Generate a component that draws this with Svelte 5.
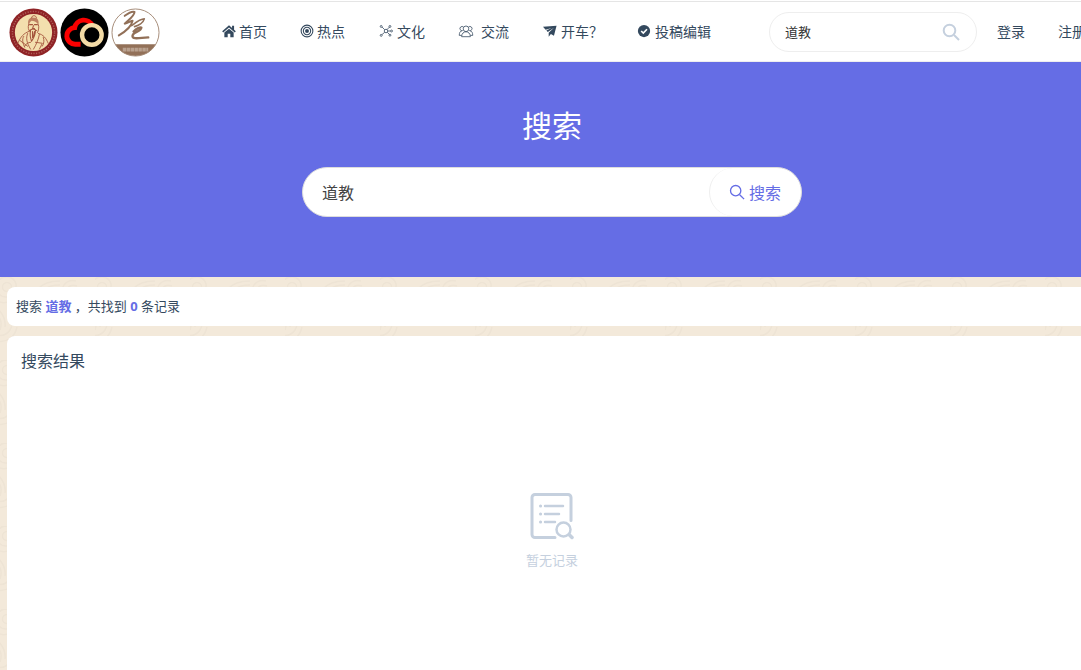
<script>
  let keyword = $state('道教');
  const term = '道教';
  const total = 0;

  const menu = [
    { label: '首页', icon: 'home' },
    { label: '热点', icon: 'target' },
    { label: '文化', icon: 'hub' },
    { label: '交流', icon: 'users' },
    { label: '开车？', icon: 'plane' },
    { label: '投稿编辑', icon: 'check' }
  ];
</script>

{#snippet magnifier()}
  <svg class="magnifier" viewBox="0 0 18 18" aria-hidden="true">
    <circle cx="7.5" cy="7.5" r="5.8" />
    <path d="M12 12l5 5" />
  </svg>
{/snippet}

<div class="page">
  <header>
    <a class="brand" href="/" aria-label="首页">
      <svg viewBox="0 0 50 50" aria-hidden="true">
        <circle cx="25" cy="25" r="24.5" fill="#8f2326" />
        <circle cx="25" cy="25" r="21.500" fill="none" stroke="#b0605a" stroke-width="1.500" stroke-dasharray="1.200 1.500" />
        <circle cx="25" cy="25" r="19" fill="#f3dfae" />
        <path d="M20 18c-2-6 2-9 5-8 4-1 6 3 5 7-2-3-5-4-7-4-2 1-2 3-3 5z" fill="#bd8062" />
        <g fill="none" stroke="#a4543c" stroke-width="0.900" stroke-linecap="round" stroke-linejoin="round">
          <path d="M23 10c0-3 5-3 5 0M20 17c-1 3 0 5 1 7M30 17c1 3 0 6-1 8" />
          <path d="M21 17h3M26 17h3M25 18l-1 3h2M21 23c2-2 5-2 7 0M22 23c-1 4 0 8 1 11 2-3 4-6 4-11M24 24v6M26 24l-1 5" stroke-width="1.100" />
          <path d="M20 24c-5 2-8 5-11 12M30 26c5 1 8 5 10 10M19 26c-2 5-1 9 3 16M31 27c-1 5-3 10-6 15M15 29c-2 3-1 7 1 11M11 33l8 6M35 30c1 3 1 6-1 9M27 35l7 1-3 6M22 35c-3 0-5 2-6 4" />
        </g>
      </svg>
      <svg viewBox="0 0 50 50" aria-hidden="true">
        <circle cx="25" cy="25" r="24.500" fill="#000" />
        <path d="M21 37h-5a8.500 8.500 0 0 1-1-17 9.500 9.500 0 0 1 18-2" fill="none" stroke="#fb0000" stroke-width="5" />
        <circle cx="32.500" cy="27.500" r="10" fill="#000" stroke="#f3dba6" stroke-width="4.500" />
      </svg>
      <svg viewBox="0 0 50 50" aria-hidden="true">
        <circle cx="25" cy="25" r="24" fill="#fff" />
        <path d="M4.200 37h41.600A24 24 0 0 1 4.200 37z" fill="#927058" />
        <circle cx="25" cy="25" r="24" fill="none" stroke="#a58b78" stroke-width="1" />
        <path d="M12 42.500h26" stroke="#b9a18f" stroke-width="4" stroke-dasharray="3.500 .5" />
        <g fill="none" stroke="#927058" stroke-linecap="round" stroke-linejoin="round">
          <path d="M14 8c4-3 7-5 10-4 0 4-6 8-10 12 3 0 6-3 8-3-1 6-9 12-14 15" stroke-width="2" />
          <path d="M21 18c4-3 9-7 13-7-1 4-6 7-10 8" stroke-width="1.600" />
          <path d="M23 24c3-3 7-5 8-4 0 4-8 4-9 8-1 5 9 2 16 2" stroke-width="2.400" />
        </g>
      </svg>
    </a>

    <nav>
      {#each menu as item}
        <a class={item.icon} href="/{item.icon}">
          <svg viewBox="0 0 16 16" aria-hidden="true">
            {#if item.icon === 'home'}
              <path fill="currentColor" d="M8 1.500l7.800 6.800-1.200 1.400L8 4 1.400 9.700.2 8.300zM11.500 2h2.300v4.500l-2.300-2zM2.700 9.800L8 5.300l5.300 4.500V15H9.500v-4h-3v4H2.700z" />
            {:else if item.icon === 'target'}
              <circle class="line" cx="8" cy="8" r="6.700" />
              <circle class="line" cx="8" cy="8" r="4.200" />
              <circle fill="currentColor" cx="8" cy="8" r="2.200" />
            {:else if item.icon === 'hub'}
              <g class="line thin">
                <path d="M3.500 3.500l3 3M12 3.500l-3 3M3.500 12l3-2.500M9.500 9.500l2.500 2.500M10 8h3" />
                <circle cx="8" cy="8" r="2" />
                <circle cx="2.500" cy="2.800" r="1.100" /><circle cx="12.500" cy="2.800" r="1.100" />
                <circle cx="2.500" cy="13" r="1.100" /><circle cx="12.500" cy="12.800" r="1.100" />
                <circle cx="14.300" cy="8" r="1.100" />
              </g>
            {:else if item.icon === 'users'}
              <g class="line thin">
                <circle cx="8" cy="5.500" r="3.200" />
                <path d="M3 14.500c0-7.500 10-7.500 10 0zM4.300 7.500a2.400 2.400 0 1 1 .8-4M11.700 7.500a2.400 2.400 0 1 0-.8-4M3 13H.3c0-3 1-4.800 3-5.300M13 13h2.700c0-3-1-4.800-3-5.300" />
              </g>
            {:else if item.icon === 'plane'}
              <path fill="currentColor" d="M0 3.200L15.500 2 12.500 13.500 9 11.500l-2.500 3V10l6-5.700-7 4.700L3.800 7.500l6-3L3 6.500z" />
            {:else}
              <circle fill="currentColor" cx="8" cy="8" r="7" />
              <path d="M4.800 8l2.400 2.400L11.400 6" fill="none" stroke="#fff" stroke-width="1.900" />
            {/if}
          </svg>
          <span>{item.label}</span>
        </a>
      {/each}
    </nav>

    <form class="quick" role="search">
      <input type="text" aria-label="站内搜索" bind:value={keyword} />
      <button type="button" aria-label="提交">{@render magnifier()}</button>
    </form>

    <div class="account">
      <a href="/login">登录</a>
      <a href="/register">注册</a>
    </div>
  </header>

  <section class="hero">
    <h1>搜索</h1>
    <form class="search" role="search">
      <input type="text" aria-label="关键词" bind:value={keyword} />
      <button type="button">{@render magnifier()}搜索</button>
    </form>
  </section>

  <main>
    <svg class="pattern" aria-hidden="true">
      <defs>
        <pattern id="waves" width="95" height="83" patternUnits="userSpaceOnUse">
          <g fill="none" stroke="#eee4d5" stroke-width="1.500">
            <circle cx="7" cy="10" r="4.500" />
            <path d="M-2 5c4-8 16-6 18 2 1 8-4 13-10 13s-9-4-8-9M0 25c5 2 8 0 10-2M-2 32c4 4 8 10 7 18M-2 39c3 3 4 8 2 14M-4 58c8 2 14-2 16-10M-3 64c10 2 18-4 20-14" />
            <path d="M38 12c5-6 14-8 22-8M44 13c4-4 10-5 16-5M62 13c1-6 6-11 14-9M67 13c1-4 5-6 10-4M72 13c1-2 3-2 5-1" />
          </g>
        </pattern>
      </defs>
      <rect width="100%" height="100%" fill="url(#waves)" />
    </svg>
    <p class="summary">搜索 <b>{term}</b> ，共找到 <b>{total}</b> 条记录</p>
    <section class="results">
      <h2>搜索结果</h2>
      <div class="empty">
        <svg viewBox="0 0 44 48" aria-hidden="true">
          <path d="M25 45.500H5a3 3 0 0 1-3-3V5.500a3 3 0 0 1 3-3h33a3 3 0 0 1 3 3v23" />
          <path d="M15 14h18M15 22h14M15 30h10" stroke-width="2.500" />
          <path d="M10.500 14h.1M10.500 22h.1M10.500 30h.1" />
          <circle cx="33.500" cy="37.500" r="7" stroke-width="2.500" />
          <path d="M39.500 43l2.500 2.500" stroke-width="3.500" />
        </svg>
        <p>暂无记录</p>
      </div>
    </section>
  </main>
</div>

<style>
  :global(body) {
    overflow-x: hidden;
    background: #f3e9da;
  }

  .page {
    display: flex;
    flex-direction: column;
    min-width: 1104px;
    min-height: 100vh;
    font-family: "Noto Sans", "Noto Sans CJK SC", sans-serif;
    color: #34495e;
  }

  .page * {
    box-sizing: border-box;
  }

  a {
    color: inherit;
    text-decoration: none;
  }

  input,
  button {
    font: inherit;
    border: 0;
    background: none;
    outline: none;
  }

  .magnifier {
    fill: none;
    stroke: currentColor;
    stroke-width: 2;
  }

  /* top bar */
  header {
    display: flex;
    align-items: center;
    height: 62px;
    padding: 2px 18px 0 9px;
    background: #fff;
    border-bottom: 1px solid #eee;
    box-shadow: inset 0 1px #fff, inset 0 2px #e5e5e5;
    font-size: 14px;
  }

  .brand {
    display: flex;
    gap: 2px;
    margin: 2px 62px 0 0;
  }

  .brand svg {
    width: 49px;
    height: 49px;
  }

  nav {
    display: flex;
    gap: 33px;
  }

  nav,
  .account {
    padding-bottom: 2px;
  }

  nav a {
    display: flex;
    align-items: center;
    gap: 3px;
    white-space: nowrap;
  }

  nav svg {
    width: 16px;
    height: 14px;
  }

  nav .home svg,
  nav .target svg {
    width: 14px;
  }

  nav .users {
    gap: 7px;
  }

  .line {
    fill: none;
    stroke: currentColor;
    stroke-width: 1.2;
  }

  .thin {
    stroke-width: 0.9;
  }

  .quick {
    display: flex;
    align-items: center;
    width: 208px;
    height: 40px;
    margin-left: auto;
    padding: 0 16px 0 15px;
    border: 1px solid #eee;
    border-radius: 20px;
    font-size: 13px;
  }

  .quick input {
    flex: 1;
    min-width: 0;
    padding: 0;
    color: #333;
  }

  .quick button {
    display: flex;
    padding: 0;
    color: #c5d0de;
  }

  .quick svg {
    width: 18px;
    height: 18px;
  }

  .account {
    display: flex;
    gap: 33px;
    margin-left: 20px;
  }

  /* banner */
  .hero {
    display: flex;
    flex-direction: column;
    align-items: center;
    padding: 40px 0 60px;
    background: #656de5;
  }

  h1 {
    margin: 0 0 17px;
    color: #fff;
    font-size: 30px;
    font-weight: 400;
    line-height: 48px;
  }

  .search {
    display: flex;
    width: 500px;
    height: 50px;
    overflow: hidden;
    background: #fff;
    border: 1px solid #ddd;
    border-radius: 25px;
    font-size: 16px;
  }

  .search input {
    flex: 1;
    min-width: 0;
    padding: 0 19px;
    color: #444;
  }

  .search button {
    display: flex;
    align-items: center;
    gap: 4px;
    padding: 0 20px 0 19px;
    border-left: 1px solid #eee;
    border-radius: 25px;
    color: #656de5;
  }

  .search svg {
    width: 16px;
    height: 16px;
    stroke-width: 1.5;
  }

  /* results */
  main {
    position: relative;
    display: flex;
    flex: 1;
    flex-direction: column;
    gap: 10px;
    padding: 10px 7px 0;
  }

  .pattern {
    position: absolute;
    inset: 0;
    width: 100%;
    height: 100%;
  }

  .summary,
  .results {
    position: relative;
    background: #fff;
    border-radius: 8px;
  }

  .summary {
    margin: 0;
    padding: 10px 9px;
    font-size: 13px;
    line-height: 19px;
  }

  b {
    color: #656de5;
    font-weight: 700;
  }

  .results {
    flex: 1;
    padding: 13px 14px;
    border-radius: 8px 8px 0 0;
  }

  h2 {
    margin: 0;
    font-size: 16px;
    font-weight: 400;
    line-height: 24px;
  }

  .empty {
    display: flex;
    flex-direction: column;
    align-items: center;
    gap: 10px;
    padding: 119px 0 70px;
    color: #c5d0de;
    font-size: 13px;
  }

  .empty svg {
    width: 44px;
    height: 48px;
    fill: none;
    stroke: currentColor;
    stroke-width: 3;
    stroke-linecap: round;
  }

  .empty p {
    margin: 0;
    line-height: 20px;
  }
</style>
